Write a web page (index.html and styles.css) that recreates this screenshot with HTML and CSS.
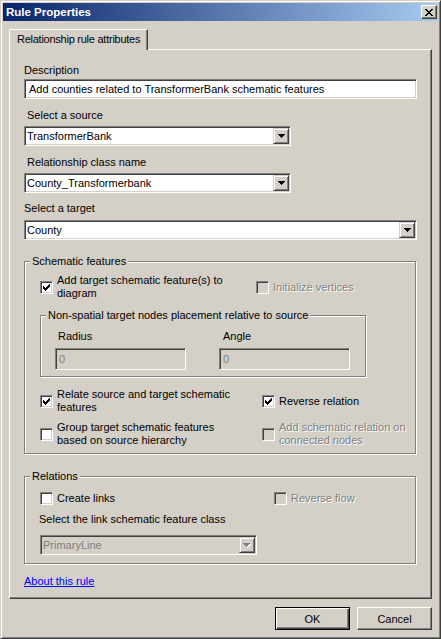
FILE: index.html
```html
<!DOCTYPE html>
<html lang="en">

<head>
    <meta charset="UTF-8">
    <meta name="viewport" content="width=device-width, initial-scale=1.0">
    <title>Rule Properties</title>
    <link rel="stylesheet" href="styles.css">
</head>

<body>
    <div class="window">
        <div class="titlebar">
            <span class="title">Rule Properties</span>
            <button class="close-btn">
                <svg width="8" height="7" viewBox="0 0 8 7">
                    <path d="M0 0h2v1h-2z M6 0h2v1h-2z M1 1h2v1h-2z M5 1h2v1h-2z M2 2h4v1h-4z M3 3h2v1h-2z M2 4h4v1h-4z M1 5h2v1h-2z M5 5h2v1h-2z M0 6h2v1h-2z M6 6h2v1h-2z" fill="#000"/>
                </svg>
            </button>
        </div>

        <div class="tabs">
            <div class="tab">Relationship rule attributes</div>
        </div>

        <div class="tab-panel">
            <!-- Campos superiores -->
            <div class="label">Description</div>
            <div class="textbox">Add counties related to TransformerBank schematic features</div>

            <div class="label label-src">Select a source</div>
            <div class="combo combo-short">
                <span class="combo-text">TransformerBank</span>
                <span class="combo-btn"><svg width="7" height="4" viewBox="0 0 7 4"><path d="M0 0h7v1h-7z M1 1h5v1h-5z M2 2h3v1h-3z M3 3h1v1h-1z" fill="#000"/></svg></span>
            </div>

            <div class="label label-rel">Relationship class name</div>
            <div class="combo combo-short">
                <span class="combo-text">County_Transformerbank</span>
                <span class="combo-btn"><svg width="7" height="4" viewBox="0 0 7 4"><path d="M0 0h7v1h-7z M1 1h5v1h-5z M2 2h3v1h-3z M3 3h1v1h-1z" fill="#000"/></svg></span>
            </div>

            <div class="label label-target">Select a target</div>
            <div class="combo">
                <span class="combo-text">County</span>
                <span class="combo-btn"><svg width="7" height="4" viewBox="0 0 7 4"><path d="M0 0h7v1h-7z M1 1h5v1h-5z M2 2h3v1h-3z M3 3h1v1h-1z" fill="#000"/></svg></span>
            </div>

            <!-- Grupo: Schematic features -->
            <fieldset class="group group-schematic">
                <legend>Schematic features</legend>
                <div class="group-body body-schematic">
                    <div class="check-row">
                        <div class="check col-add">
                            <span class="box"><svg width="11" height="11" viewBox="0 0 11 11"><path d="M2 4h1v3h-1z M3 5h1v3h-1z M4 6h1v3h-1z M5 5h1v3h-1z M6 4h1v3h-1z M7 3h1v3h-1z M8 2h1v3h-1z" fill="#000"/></svg></span>
                            <span class="check-text">Add target schematic feature(s) to<br>diagram</span>
                        </div>
                        <div class="check disabled">
                            <span class="box"></span>
                            <span class="check-text">Initialize vertices</span>
                        </div>
                    </div>

                    <fieldset class="group group-inner">
                        <legend>Non-spatial target nodes placement relative to source</legend>
                        <div class="group-body body-inner">
                            <div class="pair">
                                <div class="pair-item">
                                    <div class="label label-small">Radius</div>
                                    <div class="textbox textbox-disabled">0</div>
                                </div>
                                <div class="pair-item">
                                    <div class="label label-small label-angle">Angle</div>
                                    <div class="textbox textbox-disabled">0</div>
                                </div>
                            </div>
                        </div>
                    </fieldset>

                    <div class="check-row row-relate">
                        <div class="check col-relate">
                            <span class="box"><svg width="11" height="11" viewBox="0 0 11 11"><path d="M2 4h1v3h-1z M3 5h1v3h-1z M4 6h1v3h-1z M5 5h1v3h-1z M6 4h1v3h-1z M7 3h1v3h-1z M8 2h1v3h-1z" fill="#000"/></svg></span>
                            <span class="check-text">Relate source and target schematic<br>features</span>
                        </div>
                        <div class="check">
                            <span class="box"><svg width="11" height="11" viewBox="0 0 11 11"><path d="M2 4h1v3h-1z M3 5h1v3h-1z M4 6h1v3h-1z M5 5h1v3h-1z M6 4h1v3h-1z M7 3h1v3h-1z M8 2h1v3h-1z" fill="#000"/></svg></span>
                            <span class="check-text">Reverse relation</span>
                        </div>
                    </div>

                    <div class="check-row row-group">
                        <div class="check col-relate">
                            <span class="box"></span>
                            <span class="check-text">Group target schematic features<br>based on source hierarchy</span>
                        </div>
                        <div class="check disabled">
                            <span class="box"></span>
                            <span class="check-text">Add schematic relation on<br>connected nodes</span>
                        </div>
                    </div>
                </div>
            </fieldset>

            <!-- Grupo: Relations -->
            <fieldset class="group group-relations">
                <legend>Relations</legend>
                <div class="group-body body-relations">
                    <div class="check-row">
                        <div class="check col-links">
                            <span class="box"></span>
                            <span class="check-text">Create links</span>
                        </div>
                        <div class="check disabled">
                            <span class="box"></span>
                            <span class="check-text">Reverse flow</span>
                        </div>
                    </div>
                    <div class="label label-link">Select the link schematic feature class</div>
                    <div class="combo combo-link combo-disabled">
                        <span class="combo-text">PrimaryLine</span>
                        <span class="combo-btn"><svg width="8" height="5" viewBox="0 0 8 5"><path d="M1 1h7v1h-7z M2 2h5v1h-5z M3 3h3v1h-3z M4 4h1v1h-1z" fill="#fff"/><path d="M0 0h7v1h-7z M1 1h5v1h-5z M2 2h3v1h-3z M3 3h1v1h-1z" fill="#808080"/></svg></span>
                    </div>
                </div>
            </fieldset>

            <a href="#" class="about-link">About this rule</a>
        </div>

        <div class="buttons">
            <button class="btn btn-default">OK</button>
            <button class="btn">Cancel</button>
        </div>
    </div>
</body>

</html>
```

FILE: styles.css
```css
body {
    margin: 0;
    padding: 0;
    font-family: "Liberation Sans", Arial, sans-serif;
    font-size: 11px;
    line-height: 13px;
    color: #000;
}

/* Ventana */
.window {
    width: 441px;
    height: 639px;
    box-sizing: border-box;
    background: #d4d0c8;
    border: 1px solid;
    border-color: #d4d0c8 #404040 #404040 #d4d0c8;
    box-shadow: inset 1px 1px 0 #fff, inset -1px -1px 0 #808080;
    padding: 2px;
    display: flex;
    flex-direction: column;
}

.titlebar {
    height: 18px;
    display: flex;
    justify-content: space-between;
    align-items: center;
    padding: 0 1px 0 3px;
    background: linear-gradient(to right, #0a246a, #a6caf0);
}

.title {
    color: #fff;
    font-weight: bold;
    font-size: 11.5px;
}

.close-btn {
    width: 16px;
    height: 14px;
    padding: 0;
    margin: 0;
    box-sizing: border-box;
    background: #d4d0c8;
    border: 1px solid;
    border-color: #fff #404040 #404040 #fff;
    box-shadow: inset -1px -1px 0 #808080;
    display: flex;
    align-items: center;
    justify-content: center;
}

/* Pestaña */
.tabs {
    margin: 8px 0 -1px 6px;
    display: flex;
    position: relative;
    z-index: 1;
}

.tab {
    width: 139px;
    height: 21px;
    box-sizing: border-box;
    border: 1px solid;
    border-bottom: none;
    border-color: #fff #404040 transparent #fff;
    border-top-left-radius: 2px;
    box-shadow: inset -1px 0 0 #808080;
    padding: 3px 0 0 7px;
    background: #d4d0c8;
    white-space: nowrap;
    letter-spacing: -0.25px;
}

.tab-panel {
    margin: 0 6px;
    height: 550px;
    box-sizing: border-box;
    border: 1px solid;
    border-color: #fff #404040 #404040 #fff;
    box-shadow: inset -1px -1px 0 #808080;
    padding: 14px 14px 0 14px;
}

/* Etiquetas y campos */
.label {
    margin-bottom: 2px;
}

.label-src,
.label-rel {
    margin-top: 10px;
    margin-bottom: 4px;
    padding-left: 3px;
}

.label-target {
    margin-top: 9px;
    margin-bottom: 5px;
}

.textbox {
    height: 20px;
    box-sizing: border-box;
    background: #fff;
    border: 1px solid;
    border-color: #808080 #fff #fff #808080;
    box-shadow: inset 1px 1px 0 #404040, inset -1px -1px 0 #d4d0c8;
    padding: 0 3px 0 4px;
    line-height: 18px;
    white-space: nowrap;
    overflow: hidden;
}

.textbox-disabled {
    width: 131px;
    height: 22px;
    line-height: 20px;
    background: #d4d0c8;
    color: #808080;
    padding-left: 3px;
}

.combo {
    height: 20px;
    box-sizing: border-box;
    background: #fff;
    border: 1px solid;
    border-color: #808080 #fff #fff #808080;
    box-shadow: inset 1px 1px 0 #404040, inset -1px -1px 0 #d4d0c8;
    padding: 1px;
    display: flex;
    align-items: center;
}

.combo-short {
    width: 267px;
}

.combo-text {
    flex: 1;
    padding-left: 1px;
    white-space: nowrap;
}

.combo-btn {
    width: 16px;
    height: 16px;
    box-sizing: border-box;
    background: #d4d0c8;
    border: 1px solid;
    border-color: #d4d0c8 #404040 #404040 #d4d0c8;
    box-shadow: inset 1px 1px 0 #fff, inset -1px -1px 0 #808080;
    display: flex;
    align-items: center;
    justify-content: center;
}

.combo-disabled {
    background: #d4d0c8;
    color: #808080;
}

/* Grupos */
.group {
    margin: 15px 1px 0 0;
    padding: 0;
    border: 1px solid #808080;
    box-shadow: inset 1px 1px 0 #fff, 1px 1px 0 #fff;
    min-width: 0;
}

.group legend {
    margin-left: 5px;
    padding: 0 2px;
    background: #d4d0c8;
}

.group-body {
    padding: 6px 0 6px 15px;
}

.check-row {
    display: flex;
    align-items: center;
}

.check {
    display: flex;
    align-items: center;
    gap: 4px;
}

.box {
    width: 13px;
    height: 13px;
    box-sizing: border-box;
    flex: none;
    background: #fff;
    border: 1px solid;
    border-color: #808080 #fff #fff #808080;
    box-shadow: inset 1px 1px 0 #404040, inset -1px -1px 0 #d4d0c8;
}

.box svg {
    display: block;
}

.disabled .box {
    background: #d4d0c8;
}

.disabled .check-text {
    color: #808080;
    text-shadow: 1px 1px 0 #fff;
}

.col-add {
    width: 216px;
}

.col-relate {
    width: 222px;
}

.col-links {
    width: 234px;
}

/* Grupo interior */
.group-inner {
    width: 326px;
    box-sizing: border-box;
    margin: 9px 0 0 0;
}

.body-inner {
    padding: 8px 0 6px 14px;
}

.pair {
    display: flex;
    gap: 33px;
}

.label-small {
    padding-left: 3px;
    margin-bottom: 5px;
}

.label-angle {
    padding-left: 4px;
}

.row-relate {
    margin-top: 11px;
}

.row-group {
    margin-top: 7px;
}

/* Relations */
.group-relations {
    margin-top: 16px;
}

.body-relations {
    padding: 9px 0 8px 15px;
}

.label-link {
    margin: 8px 0 9px -1px;
}

.combo-link {
    width: 217px;
}

.about-link {
    display: inline-block;
    margin-top: 11px;
    color: #0000ff;
    text-decoration: underline;
}

/* Botones */
.buttons {
    display: flex;
    justify-content: flex-end;
    gap: 7px;
    margin: 8px 6px 0 0;
}

.btn {
    width: 75px;
    height: 23px;
    box-sizing: border-box;
    padding: 0;
    font-family: inherit;
    font-size: 11px;
    color: #000;
    background: #d4d0c8;
    border: 1px solid;
    border-color: #fff #404040 #404040 #fff;
    box-shadow: inset -1px -1px 0 #808080;
}

.btn-default {
    border-color: #000;
    box-shadow: inset 1px 1px 0 #fff, inset -1px -1px 0 #404040, inset -2px -2px 0 #808080;
}
```
